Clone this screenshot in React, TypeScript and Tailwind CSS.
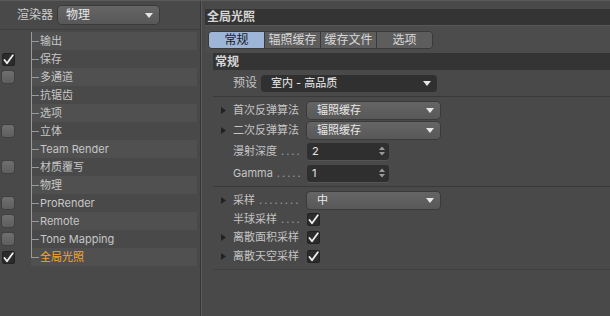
import React from "react";

// Render settings panel: left tree of render pages, right "全局光照" page.
const font = "font-['Inter','Noto_Sans_CJK_SC',sans-serif]";

type Box = "none" | "off" | "on";
const pages: { name: string; box: Box; active?: boolean }[] = [
  { name: "输出", box: "none" },
  { name: "保存", box: "on" },
  { name: "多通道", box: "off" },
  { name: "抗锯齿", box: "none" },
  { name: "选项", box: "none" },
  { name: "立体", box: "off" },
  { name: "Team Render", box: "none" },
  { name: "材质覆写", box: "off" },
  { name: "物理", box: "none" },
  { name: "ProRender", box: "off" },
  { name: "Remote", box: "off" },
  { name: "Tone Mapping", box: "off" },
  { name: "全局光照", box: "on", active: true },
];

function Check() {
  return (
    <div className="flex h-[13px] w-[13px] items-center justify-center rounded-[3px] bg-[#2c2c2c] shadow-[inset_0_0_0_1px_#222]">
      <svg width="11" height="11" viewBox="0 0 11 11">
        <path d="M1.5 6 L4 9.3 L9.8 1.2" stroke="#eeeeee" strokeWidth="1.8" fill="none" strokeLinecap="round" strokeLinejoin="round" />
      </svg>
    </div>
  );
}

function Tri() {
  return (
    <svg width="5" height="7" viewBox="0 0 5 7" className="shrink-0">
      <path d="M0 0 L5 3.5 L0 7 Z" fill="#222222" />
    </svg>
  );
}

function Arrow() {
  return (
    <svg width="8" height="5" viewBox="0 0 8 5">
      <path d="M0 0 L8 0 L4 5 Z" fill="#e6e6e6" />
    </svg>
  );
}

function Spinner() {
  return (
    <svg width="6" height="10" viewBox="0 0 6 10">
      <path d="M0 4 L3 0.5 L6 4 Z M0 6 L3 9.5 L6 6 Z" fill="#9a9a9a" />
    </svg>
  );
}

function Select({ value, dark, w }: { value: string; dark?: boolean; w: string }) {
  return (
    <div
      className={`flex h-[17px] ${w} items-center justify-between rounded-[4px] pl-[10px] pr-[6px] ${
        dark ? "bg-[#303030] text-[#eeeeee]" : "bg-gradient-to-b from-[#656565] to-[#585858] text-[#e8e8e8] shadow-[0_0_0_1px_#3a3a3a]"
      }`}
    >
      <span>{value}</span>
      <Arrow />
    </div>
  );
}

function Num({ value }: { value: string }) {
  return (
    <div className="flex h-[17px] w-[82px] items-center justify-between rounded-[3px] bg-[#2f2f2f] pl-[5px] pr-[4px] text-[#e6e6e6] shadow-[0_1px_0_#555]">
      <span>{value}</span>
      <Spinner />
    </div>
  );
}

function Row({ tri, label, dots, children, h = "h-[20px]" }: { tri?: boolean; label: string; dots?: string; children: React.ReactNode; h?: string }) {
  return (
    <div className={`flex ${h} items-center`}>
      <div className="flex w-[20px] justify-center">{tri && <Tri />}</div>
      <div className="flex w-[74px] items-center whitespace-nowrap text-[#c4c4c4]">
        <span>{label}</span>
        {dots && <span className="ml-[4px] tracking-[2px] text-[#9a9a9a]">{dots}</span>}
      </div>
      {children}
    </div>
  );
}

export default function App() {
  return (
    <div className={`flex h-[316px] w-[610px] overflow-hidden border-t border-[#5a5a5a] bg-[#494949] text-[11px] ${font}`}>
      {/* left */}
      <div className="flex w-[200px] shrink-0 flex-col">
        <div className="flex h-[29px] items-center border-b border-[#3e3e3e] pl-[17px]">
          <span className="text-[12px] text-[#cfcfcf]">渲染器</span>
          <div className="ml-[5px] flex h-[18px] w-[101px] items-center justify-between rounded-[4px] bg-gradient-to-b from-[#666] to-[#575757] pl-[8px] pr-[6px] text-[12px] text-[#e6e6e6] shadow-[0_0_0_1px_#3a3a3a]">
            <span>物理</span>
            <Arrow />
          </div>
        </div>
        <div className="relative mt-[2px] flex flex-col">
          <div className="absolute left-[31px] top-0 h-[226px] w-px bg-[#9a9a9a]" />
          {pages.map((p, i) => (
            <div key={p.name} className="flex h-[18px] items-center">
              <div className="flex w-[31px] items-center pl-[2px]">
                {p.box === "on" && <Check />}
                {p.box === "off" && (
                  <div className="h-[12px] w-[12px] rounded-[3px] bg-gradient-to-b from-[#707070] to-[#5e5e5e] shadow-[0_0_0_1px_#404040]" />
                )}
              </div>
              <div className={`flex h-[18px] w-[166px] items-center ${i % 2 === 0 ? "bg-[#505050]" : ""}`}>
                <div className="h-px w-[8px] bg-[#9a9a9a]" />
                <span className={`ml-px ${p.active ? "text-[#f4a82a]" : "text-[#c6c6c6]"}`}>{p.name}</span>
              </div>
            </div>
          ))}
        </div>
      </div>
      {/* divider */}
      <div className="flex w-[5px] shrink-0">
        <div className="w-px bg-[#353535]" />
        <div className="w-px bg-[#5c5c5c]" />
      </div>
      {/* right */}
      <div className="flex flex-1 flex-col pt-[8px]">
        <div className="flex h-[17px] items-center border-b border-[#575757] bg-[#343434] pl-[2px] text-[12px] font-semibold text-[#d6d6d6]">全局光照</div>
        <div className="flex h-[27px] items-center bg-[#4c4c4c] pl-[3px]">
          <div className="flex h-[18px] overflow-hidden rounded-[4px] border border-[#3a3a3a] text-[12px]">
            <div className="flex w-[55px] items-center justify-center bg-[#9db5d6] text-[#1c1c1c]">常规</div>
            {["辐照缓存", "缓存文件", "选项"].map((t) => (
              <div key={t} className="flex w-[56px] items-center justify-center border-l border-[#3a3a3a] bg-[#5d5d5d] text-[#d8d8d8]">
                {t}
              </div>
            ))}
          </div>
        </div>
        <div className="ml-[8px] flex h-[17px] items-center bg-[#343434] pl-[2px] text-[12px] font-semibold text-[#d6d6d6]">常规</div>
        <div className="ml-[8px] flex h-[27px] items-center border-b border-[#393939]">
          <span className="ml-[20px] w-[28px] text-[12px] text-[#c4c4c4]">预设</span>
          <Select value="室内 - 高品质" dark w="w-[176px]" />
        </div>
        <div className="ml-[8px] flex flex-col border-b border-[#393939] pb-[2px] pt-[3px]">
          <Row tri label="首次反弹算法">
            <Select value="辐照缓存" w="w-[133px]" />
          </Row>
          <Row tri label="二次反弹算法">
            <Select value="辐照缓存" w="w-[133px]" />
          </Row>
          <Row label="漫射深度" dots="...." h="h-[22px]">
            <Num value="2" />
          </Row>
          <Row label="Gamma" dots="....." h="h-[22px]">
            <Num value="1" />
          </Row>
        </div>
        <div className="ml-[8px] flex flex-col border-b border-[#3f3f3f] pb-[3px] pt-[3px]">
          <Row tri label="采样" dots="........">
            <Select value="中" w="w-[133px]" />
          </Row>
          <Row label="半球采样" dots="...." h="h-[18px]">
            <Check />
          </Row>
          <Row tri label="离散面积采样" h="h-[19px]">
            <Check />
          </Row>
          <Row tri label="离散天空采样" h="h-[19px]">
            <Check />
          </Row>
        </div>
      </div>
    </div>
  );
}
